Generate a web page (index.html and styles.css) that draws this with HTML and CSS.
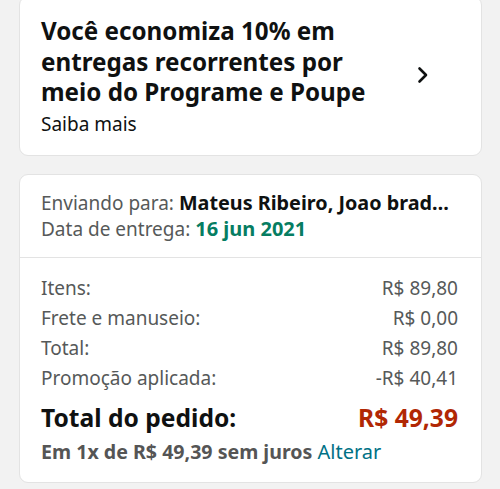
FILE: index.html
```html
<!DOCTYPE html>
<html lang="pt-BR">
<head>
<meta charset="utf-8">
<link rel="stylesheet" href="styles.css">
</head>
<body>
<div class="page">
  <div class="card promo">
    <div class="promo-text">
      <div class="promo-title">Você economiza 10% em entregas recorrentes por meio do Programe e Poupe</div>
      <div class="promo-link">Saiba mais</div>
    </div>
    <svg class="chevron" width="12" height="18" viewBox="0 0 12 18" aria-hidden="true">
      <polyline points="2.5,2.5 9,9 2.5,15.5" fill="none" stroke="#0f1111" stroke-width="2.6" stroke-linecap="round" stroke-linejoin="round"/>
    </svg>
  </div>

  <div class="card summary">
    <div class="ship">
      <div class="ship-line"><span class="muted">Enviando para: </span><span class="strong">Mateus Ribeiro, Joao brad…</span></div>
      <div class="ship-line"><span class="muted">Data de entrega: </span><span class="date">16 jun 2021</span></div>
    </div>
    <div class="totals">
      <div class="row"><span>Itens:</span><span>R$ 89,80</span></div>
      <div class="row"><span>Frete e manuseio:</span><span>R$ 0,00</span></div>
      <div class="row"><span>Total:</span><span>R$ 89,80</span></div>
      <div class="row"><span>Promoção aplicada:</span><span>-R$ 40,41</span></div>
      <div class="row grand"><span>Total do pedido:</span><span class="price">R$ 49,39</span></div>
      <div class="install">Em 1x de R$ 49,39 sem juros <span class="link">Alterar</span></div>
    </div>
  </div>
</div>
</body>
</html>
```

FILE: styles.css
```css
* { box-sizing: border-box; }
html, body { margin: 0; padding: 0; }
body {
  background: #f2f2f2;
  font-family: "Noto Sans", "Open Sans", sans-serif;
  color: #0f1111;
  width: 500px;
  height: 489px;
  overflow: hidden;
}
.page {
  padding: 0 18px 0 19px;
  display: flex;
  flex-direction: column;
  gap: 18px;
}
.card {
  background: #ffffff;
  border: 1px solid #e3e3e3;
  border-radius: 9px;
}
.promo {
  margin-top: -4px;
  display: flex;
  align-items: center;
  padding: 19px 52px 18px 21px;
}
.promo-text { width: 345px; flex: none; }
.promo-title {
  font-size: 24.2px;
  font-weight: 700;
  line-height: 30.5px;
  color: #0f1111;
}
.promo-link {
  font-size: 19px;
  line-height: 26px;
  margin-top: 3px;
  color: #0f1111;
}
.chevron { flex: none; display: block; margin: -3px 0 0 auto; }
.ship {
  padding: 15px 22px 15px 21px;
  border-bottom: 1px solid #e3e3e3;
  font-size: 19px;
  line-height: 26px;
}
.ship-line {
  white-space: nowrap;
}
.muted { color: #565959; }
.strong { font-weight: 700; color: #0f1111; font-size: 19.8px; }
.date { font-weight: 700; color: #067d62; font-size: 20px; }
.totals {
  padding: 15px 23px 17px 21px;
  font-size: 19px;
  color: #565959;
}
.row {
  display: flex;
  justify-content: space-between;
  line-height: 30px;
}
.row.grand {
  margin-top: 9px;
  font-size: 24.6px;
  font-weight: 700;
  line-height: 32px;
  color: #0f1111;
}
.price { color: #b12704; }
.install {
  margin-top: 5px;
  font-size: 19.6px;
  font-weight: 700;
  line-height: 26px;
  color: #555555;
}
.link { font-weight: 400; color: #007185; font-size: 20px; }
```
